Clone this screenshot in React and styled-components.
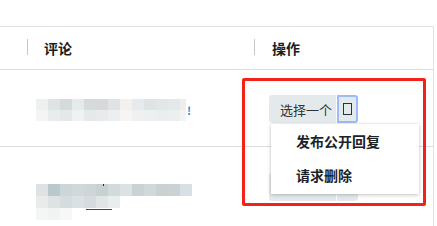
import React from "react";
import styled, { createGlobalStyle } from "styled-components";

const Global = createGlobalStyle`
  html, body { margin: 0; padding: 0; background: #fff; }
  body { font-family: "Noto Sans CJK SC", "Noto Sans", sans-serif; width: 437px; height: 226px; overflow: hidden; }
`;

const Page = styled.div`
  position: relative;
  width: 437px;
  height: 226px;
  padding-top: 26px;
  box-sizing: border-box;
`;

const Table = styled.div`
  width: 434px;
  border-top: 1px solid #e2e2e2;
  border-right: 1px solid #e2e2e2;
  box-sizing: border-box;
`;

const Row = styled.div`
  display: grid;
  grid-template-columns: 28px 227px 1fr;
  height: ${(p) => p.$h}px;
  border-bottom: 1px solid ${(p) => (p.$last ? "transparent" : "#dedede")};
  box-sizing: border-box;
`;

const HeadCell = styled.div`
  position: relative;
  display: flex;
  align-items: center;
  padding-left: ${(p) => p.$pad}px;
  font-size: 14px;
  font-weight: 700;
  color: #1c1c1c;
  &::before {
    content: "";
    display: ${(p) => (p.$sep ? "block" : "none")};
    position: absolute;
    left: -1px;
    top: 12px;
    width: 1px;
    height: 16px;
    background: #c4c7c9;
  }
`;

const Cell = styled.div`
  display: flex;
  align-items: ${(p) => (p.$top != null ? "flex-start" : "center")};
  padding-left: ${(p) => p.$pad}px;
  padding-top: ${(p) => p.$top || 0}px;
  box-sizing: border-box;
`;

const Blurred = styled.div`
  display: flex;
  align-items: flex-start;
  gap: 1px;
`;

const Bang = styled.span`
  font-size: 11px;
  font-weight: 700;
  color: #1890e0;
  line-height: 1;
  margin-top: 6px;
`;

const Group = styled.div`
  display: flex;
  margin-top: ${(p) => p.$mt}px;
`;

const SelectBtn = styled.div`
  width: 67px;
  height: 28px;
  background: #e4eaeb;
  border-radius: 3px 0 0 3px;
  display: flex;
  align-items: center;
  padding-left: 11px;
  box-sizing: border-box;
  font-size: 13px;
  color: #2e3438;
`;

const IconBtn = styled.div`
  width: 21px;
  height: 28px;
  margin-left: 1px;
  background: #e4eaeb;
  border: 2px solid ${(p) => (p.$focus ? "#9cbcf5" : "transparent")};
  border-radius: 0 3px 3px 0;
  box-sizing: border-box;
  display: flex;
  align-items: center;
  justify-content: center;
`;

const Tofu = styled.span`
  width: 9px;
  height: 12px;
  border: 1px solid #26343a;
  box-sizing: border-box;
`;

const Menu = styled.div`
  position: absolute;
  left: 271px;
  top: 124px;
  width: 148px;
  height: 70px;
  background: #fff;
  box-shadow: 0 1px 4px rgba(0, 0, 0, 0.22), 0 0 1px rgba(0, 0, 0, 0.15);
  display: flex;
  flex-direction: column;
  z-index: 2;
`;

const MenuItem = styled.div`
  height: 34px;
  display: flex;
  align-items: center;
  padding-left: 25px;
  font-size: 14px;
  font-weight: 700;
  color: #1b2328;
`;

const Highlight = styled.div`
  position: absolute;
  left: 242px;
  top: 78px;
  width: 184px;
  height: 128px;
  border: 3px solid #f5201a;
  border-radius: 2px;
  box-sizing: border-box;
  z-index: 3;
  pointer-events: none;
`;

const row1 = [
  ["#eef0f0", "#dfe3e3", "#d5dadc", "#e5eaec", "#d6dadc", "#d5d9dc", "#e0e3e5", "#f2f1ef", "#e5eaec", "#dfe3e4", "#e3e6e7", "#e4e8e8", "#eceeee"],
  ["#f3f5f5", "#e9eced", "#e5e8e9", "#eff2f3", "#e6e9ea", "#e8eaeb", "#eceeef", "#f6f5f4", "#eef0f2", "#edf0f0", "#eaeeee", "#ecefef", "#f3f4f4"],
];
const row2 = [
  ["#dde2e4", "#b9c9cb", "#ccd5d8", "#d2d8da", "#cdd5d8", "#c9d0d1", "#d3dadc", "#dde1e2", "#c9d3d6", "#d0d8d9", "#cbd0d1", "#ccd2d4", "#d8e0e5"],
  ["#e9ebeb", "#dfe2e3", "#d5dcdf", "#dbe1e2", "#d5dbde", "#e1e5e6", "#e9edee"],
  ["#f4f5f5", "#f1f2f2", "#f6f7f7"],
];

function Mosaic({ rows, width, cellH }) {
  return (
    <svg width={width} height={rows.length * cellH} viewBox={`0 0 ${width} ${rows.length * cellH}`}>
      {rows.map((r, i) =>
        r.map((c, j) => (
          <rect key={`${i}-${j}`} x={j * 12} y={i * cellH} width={12} height={cellH} fill={c} />
        ))
      )}
      {cellH === 12 && (
        <>
          <rect x={67} y={0} width={1} height={2} fill="#1f2a30" />
          <rect x={50} y={25} width={26} height={1} fill="#3a4a55" />
        </>
      )}
    </svg>
  );
}

function Actions({ mt, focus, covered }) {
  return (
    <Group $mt={mt}>
      <SelectBtn>{covered ? null : "选择一个"}</SelectBtn>
      <IconBtn $focus={focus}>
        <Tofu />
      </IconBtn>
    </Group>
  );
}

export default function App() {
  return (
    <Page>
      <Global />
      <Table>
        <Row $h={43}>
          <HeadCell $pad={0} />
          <HeadCell $pad={16} $sep>评论</HeadCell>
          <HeadCell $pad={17} $sep>操作</HeadCell>
        </Row>
        <Row $h={77}>
          <Cell $pad={0} />
          <Cell $pad={8} $top={29}>
            <Blurred>
              <Mosaic rows={row1} width={150} cellH={11} />
              <Bang>!</Bang>
            </Blurred>
          </Cell>
          <Cell $pad={14}>
            <Actions mt={2} focus />
          </Cell>
        </Row>
        <Row $h={80} $last>
          <Cell $pad={0} />
          <Cell $pad={8} $top={37}>
            <Blurred>
              <Mosaic rows={row2} width={156} cellH={12} />
            </Blurred>
          </Cell>
          <Cell $pad={14}>
            <Actions mt={0} covered />
          </Cell>
        </Row>
      </Table>
      <Menu>
        <MenuItem>发布公开回复</MenuItem>
        <MenuItem>请求删除</MenuItem>
      </Menu>
      <Highlight />
    </Page>
  );
}
